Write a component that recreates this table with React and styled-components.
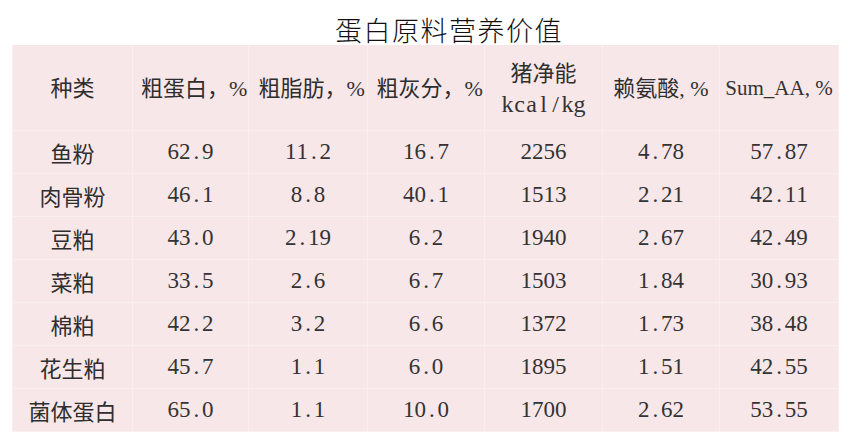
import React from "react";
import styled, { createGlobalStyle } from "styled-components";

const GlobalStyle = createGlobalStyle`
  html, body {
    margin: 0;
    padding: 0;
    background: #fff;
  }
`;

const Page = styled.div`
  width: 868px;
  height: 445px;
  padding: 0 0 0 12px;
  box-sizing: border-box;
  font-family: "Liberation Serif", "Noto Sans CJK SC", serif;
`;

const Title = styled.h1`
  margin: 0;
  height: 45px;
  width: 844px;
  text-align: center;
  font-family: "Noto Sans CJK SC", sans-serif;
  font-weight: 300;
  font-size: 27px;
  line-height: 60px;
  letter-spacing: 1.5px;
  color: #111;
  box-sizing: border-box;
  padding-left: 30px;
`;

const Table = styled.table`
  border-collapse: collapse;
  table-layout: fixed;
  width: 826px;
  background: #f8e7e9;
  color: #333;
`;

const HeadCell = styled.th`
  height: 85px;
  padding: 0;
  font-weight: 400;
  font-size: ${(p) => (p.$small ? "21px" : "22px")};
  line-height: 30px;
  text-align: center;
  border: 1px solid #faeff0;
  border-top: none;
  white-space: nowrap;
`;

const Cell = styled.td`
  height: 42px;
  padding: 0;
  font-size: 23px;
  text-align: center;
  border: 1px solid #faeff0;
`;

const Cjk = styled.span`
  font-family: "Noto Sans CJK SC", sans-serif;
  font-size: 22px;
  color: #2e2e2e;
`;

const Unit = styled.span`
  font-size: 24px;
`;

const Ch = styled.span`
  display: inline-block;
  width: 0.5em;
  text-align: center;
`;

const Mono = ({ text }) => (
  <span>
    {text.split("").map((c, i) => (
      <Ch key={i}>{c}</Ch>
    ))}
  </span>
);

const widths = [120, 116, 119, 117, 118, 117, 119];

const rows = [
  ["鱼粉", "62.9", "11.2", "16.7", "2256", "4.78", "57.87"],
  ["肉骨粉", "46.1", "8.8", "40.1", "1513", "2.21", "42.11"],
  ["豆粕", "43.0", "2.19", "6.2", "1940", "2.67", "42.49"],
  ["菜粕", "33.5", "2.6", "6.7", "1503", "1.84", "30.93"],
  ["棉粕", "42.2", "3.2", "6.6", "1372", "1.73", "38.48"],
  ["花生粕", "45.7", "1.1", "6.0", "1895", "1.51", "42.55"],
  ["菌体蛋白", "65.0", "1.1", "10.0", "1700", "2.62", "53.55"],
];

export default function App() {
  return (
    <Page>
      <GlobalStyle />
      <Title>蛋白原料营养价值</Title>
      <Table>
        <colgroup>
          {widths.map((w, i) => (
            <col key={i} style={{ width: w }} />
          ))}
        </colgroup>
        <thead>
          <tr>
            <HeadCell><Cjk>种类</Cjk></HeadCell>
            <HeadCell><Cjk>粗蛋白，</Cjk><Mono text="%" /></HeadCell>
            <HeadCell><Cjk>粗脂肪，</Cjk><Mono text="%" /></HeadCell>
            <HeadCell><Cjk>粗灰分，</Cjk><Mono text="%" /></HeadCell>
            <HeadCell>
              <Cjk>猪净能</Cjk>
              <br />
              <Unit><Mono text="kcal/kg" /></Unit>
            </HeadCell>
            <HeadCell><Cjk>赖氨酸</Cjk>, %</HeadCell>
            <HeadCell $small>Sum_AA, %</HeadCell>
          </tr>
        </thead>
        <tbody>
          {rows.map((r) => (
            <tr key={r[0]}>
              <Cell><Cjk>{r[0]}</Cjk></Cell>
              {r.slice(1).map((v, i) => (
                <Cell key={i}><Mono text={v} /></Cell>
              ))}
            </tr>
          ))}
        </tbody>
      </Table>
    </Page>
  );
}
